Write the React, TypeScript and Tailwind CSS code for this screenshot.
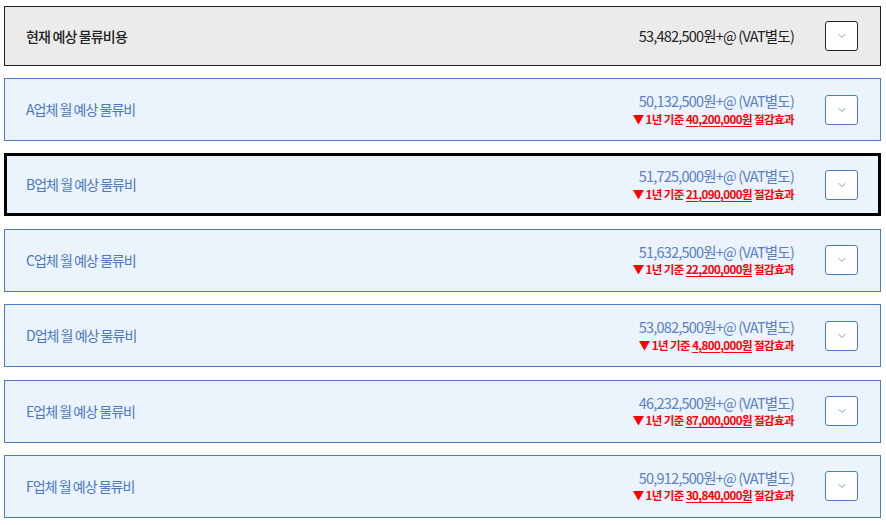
import { ChevronDown } from 'lucide-react';
import clsx from 'clsx';

const vendors = [
  { name: 'A', price: '50,132,500', save: '40,200,000' },
  { name: 'B', price: '51,725,000', save: '21,090,000', selected: true },
  { name: 'C', price: '51,632,500', save: '22,200,000' },
  { name: 'D', price: '53,082,500', save: '4,800,000' },
  { name: 'E', price: '46,232,500', save: '87,000,000' },
  { name: 'F', price: '50,912,500', save: '30,840,000' },
];

const font = { fontFamily: '"Noto Sans CJK KR", "Noto Sans", sans-serif' };

function ToggleButton({ dark }: { dark?: boolean }) {
  return (
    <button
      className={clsx(
        'w-[33px] h-[30px] rounded-[3px] bg-white flex items-center justify-center border',
        dark ? 'border-[#222]' : 'border-[#4a7cc5]'
      )}
    >
      <ChevronDown size={12} strokeWidth={1.5} className="text-[#4a7cc5]" />
    </button>
  );
}

export default function App() {
  return (
    <div className="w-[886px] h-[525px] bg-white pl-[4px] pr-[5px] pt-[6px]" style={font}>
      {/** Current cost */}
      <div className="h-[60px] border border-[#222] bg-[#ebebeb] flex items-center pl-[21px] pr-[22px]">
        <div className="text-[14px] font-medium text-[#222] tracking-[-0.06em]">현재 예상 물류비용</div>
        <div className="ml-auto mr-[31px] text-[14.5px] text-[#222] tracking-[-0.055em]">53,482,500원+@ (VAT별도)</div>
        <ToggleButton dark />
      </div>
      {/** Vendors */}
      <div className="mt-[12px] flex flex-col gap-[12.4px]">
        {vendors.map((v) => (
          <div
            key={v.name}
            className={clsx(
              'h-[63px] bg-[#ebf3fd] flex items-center',
              v.selected ? 'border-[3px] border-black pl-[19px] pr-[20px]' : 'border border-[#4a7cc5] pl-[21px] pr-[22px]'
            )}
          >
            <div className="text-[14px] text-[#4a78c0] tracking-[-0.07em]">{v.name}업체 월 예상 물류비</div>
            <div className="ml-auto mr-[31px] flex flex-col items-end leading-none">
              <div className="text-[14.5px] text-[#5a80c2] tracking-[-0.055em]">{v.price}원+@ (VAT별도)</div>
              <div className="mt-[5px] text-[11.5px] font-bold text-[#ff0000] tracking-[-0.05em]">
                ▼ 1년 기준 <span className="underline underline-offset-2">{v.save}원</span> 절감효과
              </div>
            </div>
            <ToggleButton />
          </div>
        ))}
      </div>
    </div>
  );
}
